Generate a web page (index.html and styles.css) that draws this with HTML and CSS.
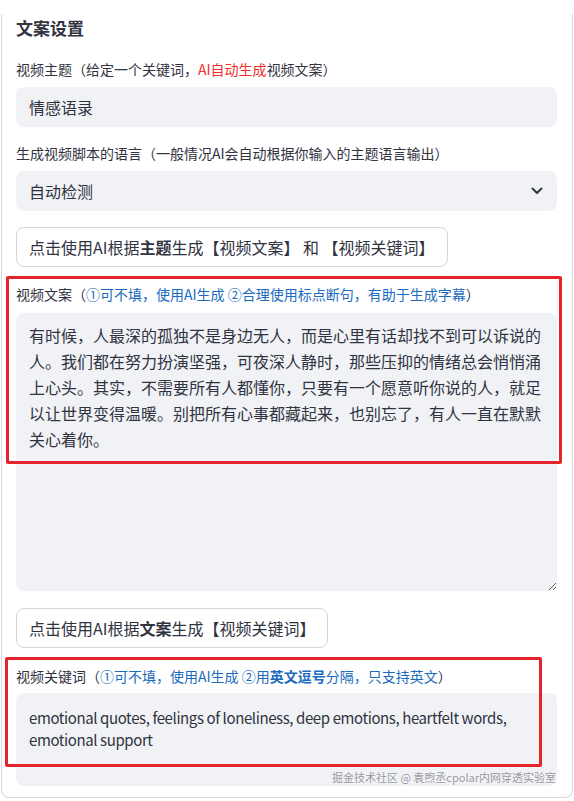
FILE: index.html
```html
<!DOCTYPE html>
<html lang="zh-CN">
<head>
    <meta charset="UTF-8">
    <meta name="viewport" content="width=device-width, initial-scale=1.0">
    <title>文案设置</title>
    <link rel="stylesheet" href="styles.css">
</head>
<body>
    <div class="panel">
        <h2 class="panel-title">文案设置</h2>

        <div class="field">
            <div class="field-label">视频主题（给定一个关键词，<span class="hl-red">AI自动生成</span>视频文案）</div>
            <div class="text-input">情感语录</div>
        </div>

        <div class="field field-lang">
            <div class="field-label">生成视频脚本的语言（一般情况AI会自动根据你输入的主题语言输出）</div>
            <div class="select-box">
                <span>自动检测</span>
                <svg class="chevron" width="12" height="8" viewBox="0 0 12 8">
                    <path d="M1.5 1.5 L6 6 L10.5 1.5" fill="none" stroke="#31333f" stroke-width="2" stroke-linecap="round" stroke-linejoin="round"/>
                </svg>
            </div>
        </div>

        <button class="ai-button">点击使用AI根据<b>主题</b>生成【视频文案】 和 【视频关键词】</button>

        <div class="field field-script">
            <div class="mark mark-script"></div>
            <div class="field-label">视频文案（<span class="hl-blue">①可不填，使用AI生成 ②合理使用标点断句，有助于生成字幕</span>）</div>
            <textarea class="text-area area-script" readonly>有时候，人最深的孤独不是身边无人，而是心里有话却找不到可以诉说的人。我们都在努力扮演坚强，可夜深人静时，那些压抑的情绪总会悄悄涌上心头。其实，不需要所有人都懂你，只要有一个愿意听你说的人，就足以让世界变得温暖。别把所有心事都藏起来，也别忘了，有人一直在默默关心着你。</textarea>
        </div>

        <button class="ai-button ai-button-second">点击使用AI根据<b>文案</b>生成【视频关键词】</button>

        <div class="field field-keywords">
            <div class="mark mark-keywords"></div>
            <div class="field-label">视频关键词（<span class="hl-blue">①可不填，使用AI生成 ②用<b>英文逗号</b>分隔，只支持英文</span>）</div>
            <div class="text-area area-keywords">emotional quotes, feelings of loneliness, deep emotions, heartfelt words, emotional support</div>
        </div>

        <div class="watermark">掘金技术社区 @ 袁煦丞cpolar内网穿透实验室</div>
    </div>
</body>
</html>
```

FILE: styles.css
```css
body {
    margin: 0;
    padding: 0 1px;
    background-color: #ffffff;
    font-family: "Noto Sans CJK SC", "Noto Sans", sans-serif;
    color: #31333f;
}

.panel {
    position: relative;
    margin-top: 14px;
    border: 1px solid #d9d9dd;
    border-top: none;
    border-radius: 0 0 8px 8px;
    padding: 0 15px 12px 14px;
    height: 784px;
    box-sizing: border-box;
}

.panel-title {
    margin: 0;
    padding-top: 1px;
    font-size: 17px;
    line-height: 26px;
    font-weight: 700;
}

.field {
    position: relative;
    margin-top: 18px;
}

.field-lang {
    margin-top: 16px;
}

.field-label {
    font-size: 14px;
    line-height: 20px;
    margin-bottom: 8px;
}

.hl-red {
    color: #f0302c;
}

.hl-blue {
    color: #1a6bc0;
}

.text-input,
.select-box {
    background-color: #f0f2f6;
    border-radius: 8px;
    height: 40px;
    padding: 0 13px;
    font-size: 16px;
    line-height: 40px;
    box-sizing: border-box;
}

.select-box {
    display: flex;
    justify-content: space-between;
    align-items: center;
}

.chevron {
    margin-right: 1px;
}

.ai-button {
    display: block;
    margin-top: 16px;
    padding: 0 12px;
    height: 40px;
    background-color: #ffffff;
    border: 1px solid #d6d6d9;
    border-radius: 8px;
    font-family: inherit;
    font-size: 16px;
    color: #31333f;
    cursor: pointer;
}

.ai-button-second {
    margin-top: 17px;
}

.ai-button b {
    font-weight: 700;
}

.text-area {
    display: block;
    width: 100%;
    box-sizing: border-box;
    background-color: #f0f2f6;
    border: none;
    border-radius: 8px;
    padding: 9px 13px;
    font-family: inherit;
    font-size: 16px;
    line-height: 26px;
    color: #31333f;
    outline: none;
}

.field-script {
    margin-top: 17px;
}

.field-script .field-label {
    margin-bottom: 9px;
}

.area-script {
    height: 278px;
    resize: vertical;
}

.field-keywords {
    margin-top: 18px;
}

.field-keywords .field-label {
    margin-bottom: 7px;
}

.area-keywords {
    height: 93px;
    padding-top: 14px;
    font-size: 15px;
    letter-spacing: -0.4px;
    line-height: 22px;
}

/* красные рамки выделения поверх полей */
.mark {
    position: absolute;
    border: 3px solid #e4242a;
    border-radius: 2px;
    pointer-events: none;
    box-sizing: border-box;
    z-index: 2;
}

.mark-script {
    left: -10px;
    right: -5px;
    top: -8px;
    height: 188px;
}

.mark-keywords {
    left: -11px;
    right: 15px;
    top: -9px;
    height: 110px;
}

.watermark {
    position: absolute;
    right: 16px;
    bottom: 12px;
    font-size: 11px;
    color: #98989d;
    text-shadow: 0 0 2px #ffffff;
    z-index: 3;
}
```
